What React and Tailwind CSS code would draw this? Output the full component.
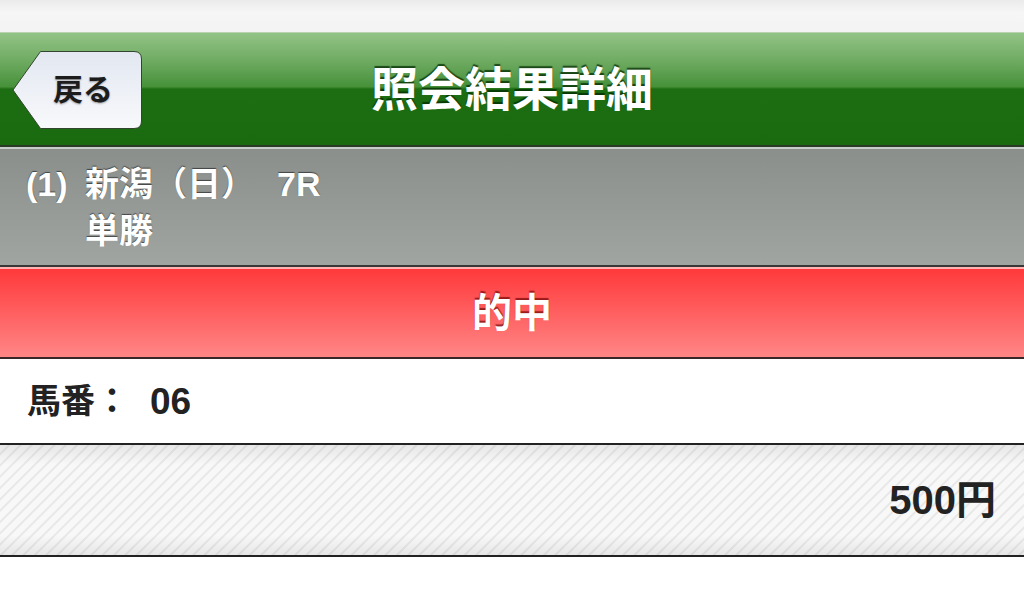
export default function App() {
  return (
    <div className="w-[1024px] h-[590px] overflow-hidden bg-white flex flex-col font-bold font-['Liberation_Sans','Noto_Sans_CJK_JP',sans-serif]">
      {/* status strip */}
      <div className="h-[32px] shrink-0 bg-[linear-gradient(to_bottom,#ebebeb,#f6f6f6_40%,#f3f3f3)]" />

      {/* navigation bar */}
      <div className="relative h-[115px] shrink-0 border-t border-t-[#b7d2ae] border-b-2 border-b-[#2a3a26] bg-[linear-gradient(to_bottom,#92c386_0%,#6fab62_25%,#46913a_48%,#1d6e13_50%,#1a6a10_100%)] flex items-center justify-center">
        <div className="absolute left-[12px] top-[18px] w-[130px] h-[78px]">
          <svg width="130" height="78" viewBox="0 0 130 78" className="absolute inset-0">
            <defs>
              <linearGradient id="backFill" x1="0" y1="0" x2="0" y2="1">
                <stop offset="0" stopColor="#e2e7f1" />
                <stop offset="1" stopColor="#f8f9fb" />
              </linearGradient>
            </defs>
            <path
              d="M28.5 0.5 H122 Q129.5 0.5 129.5 8 V70 Q129.5 77.5 122 77.5 H28.5 L1 39 Z"
              fill="url(#backFill)"
              stroke="#33452e"
              strokeWidth="1"
            />
          </svg>
          <div className="relative h-full flex items-center pl-[41px] text-[30px] leading-none text-[#1c1c1c] [text-shadow:0_1px_2px_rgba(0,0,0,0.35)]">
            戻る
          </div>
        </div>
        <div className="text-[47px] leading-none text-white [text-shadow:0_-2px_1px_rgba(0,40,0,0.75)]">
          照会結果詳細
        </div>
      </div>

      {/* race header */}
      <div className="h-[120px] shrink-0 border-t-2 border-t-[#c7cecb] border-b-2 border-b-[#383838] bg-[linear-gradient(to_bottom,#8a8f8c,#a0a5a2)] flex pl-[26px] pt-[12px] text-white text-[34px] leading-[47px] [text-shadow:0_-1px_1px_rgba(0,0,0,0.55)]">
        <div className="w-[59px]">(1)</div>
        <div className="flex flex-col">
          <div className="flex">
            <span>新潟（日）</span>
            <span className="ml-[22px]">7R</span>
          </div>
          <div>単勝</div>
        </div>
      </div>

      {/* result banner */}
      <div className="h-[92px] shrink-0 border-t-2 border-t-[#ffb3b3] border-b-2 border-b-[#3a2626] bg-[linear-gradient(to_bottom,#ff393b,#ff8686)] flex items-center justify-center text-white text-[40px] leading-none [text-shadow:0_-2px_1px_rgba(110,0,0,0.7)]">
        的中
      </div>

      {/* horse number */}
      <div className="h-[86px] shrink-0 border-b-2 border-b-[#222] bg-white flex items-center pl-[27px] text-[#222] leading-none">
        <span className="text-[34px]">馬番：</span>
        <span className="ml-[21px] text-[37px]">06</span>
      </div>

      {/* payout */}
      <div className="h-[112px] shrink-0 border-b-2 border-b-[#222] bg-[image:linear-gradient(to_bottom,rgba(0,0,0,0.07),rgba(0,0,0,0)_18%,rgba(0,0,0,0)_82%,rgba(0,0,0,0.07)),repeating-linear-gradient(135deg,#f8f8f8_0px,#f8f8f8_5px,#e8e8e8_6px,#e8e8e8_7px,#f8f8f8_8px)] flex items-center justify-end pr-[28px] text-[#222] text-[40px] leading-none">
        500円
      </div>

      <div className="flex-1 bg-white" />
    </div>
  );
}
